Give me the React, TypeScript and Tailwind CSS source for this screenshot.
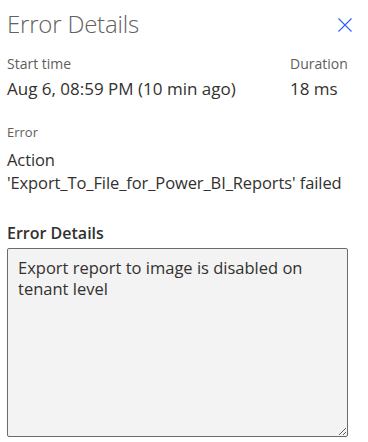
import React from 'react';

const font = { fontFamily: '"Segoe UI", "Open Sans", "Noto Sans", sans-serif' };

export default function App() {
  return (
    <div className="w-[368px] h-[442px] bg-white text-[#323130] overflow-hidden" style={font}>
      <div className="pl-[7px] pr-[16px] pt-[12px]">
        <div className="flex items-center justify-between h-[24px]">
          <h1 className="text-[24px] font-light text-[#616161] leading-[24px] tracking-[-0.2px]">Error Details</h1>
          <button className="w-[14px] h-[14px] flex items-center justify-center mt-[2px]">
            <svg width="14" height="14" viewBox="0 0 14 14" fill="none" stroke="#2b66f5" strokeWidth="1.2">
              <path d="M0.5 0.5 L13.5 13.5 M13.5 0.5 L0.5 13.5" />
            </svg>
          </button>
        </div>

        <div className="flex mt-[18px]">
          <div className="w-[283px]">
            <div className="text-[14px] text-[#605e5c] leading-[20px]">Start time</div>
            <div className="text-[17px] leading-[22px] mt-[4px]">Aug 6, 08:59 PM (10 min ago)</div>
          </div>
          <div>
            <div className="text-[14px] text-[#605e5c] leading-[20px]">Duration</div>
            <div className="text-[17px] leading-[22px] mt-[4px]">18 ms</div>
          </div>
        </div>

        <div className="mt-[23px]">
          <div className="text-[13px] text-[#605e5c] leading-[18px]">Error</div>
          <div className="text-[16.5px] leading-[23px] mt-[7px] tracking-[-0.1px]">
            Action
            <br />
            'Export_To_File_for_Power_BI_Reports' failed
          </div>
        </div>

        <div className="mt-[28px]">
          <div className="text-[16px] font-semibold leading-[22px]">Error Details</div>
          <textarea
            readOnly
            defaultValue="Export report to image is disabled on tenant level"
            className="mt-[4px] block w-[341px] h-[189px] bg-[#f3f3f3] border border-[#6b6b6b] rounded-[2px] pl-[10px] pr-[10px] pt-[8px] text-[16.5px] leading-[21px] text-[#323130] outline-none"
            style={font}
          />
        </div>
      </div>
    </div>
  );
}
